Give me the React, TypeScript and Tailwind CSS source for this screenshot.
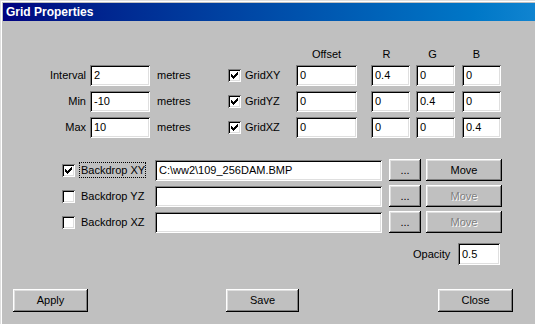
import React from "react";

const font = "font-['Liberation_Sans',Arial,sans-serif]";

// sunken white edit box
const Field = ({ value, className }: { value?: string; className: string }) => (
  <div
    className={`${className} bg-white text-black text-[11px] leading-[21px] pl-[4px] whitespace-nowrap overflow-hidden shadow-[inset_1px_1px_#808080,inset_-1px_-1px_#ffffff,inset_2px_2px_#000000,inset_-2px_-2px_#dfdfdf]`}
  >
    {value}
  </div>
);

// raised push button
const Button = ({
  label,
  className,
  disabled,
}: {
  label: string;
  className: string;
  disabled?: boolean;
}) => (
  <div
    className={`${className} flex items-center justify-center text-[11px] bg-[#c0c0c0] shadow-[inset_-1px_-1px_#000000,inset_1px_1px_#ffffff,inset_-2px_-2px_#808080,inset_2px_2px_#dfdfdf] ${
      disabled ? "text-[#808080] [text-shadow:1px_1px_#ffffff]" : "text-black"
    }`}
  >
    {label}
  </div>
);

const checkCols = [2, 3, 4, 3, 2, 1, 0];

const CheckBox = ({ checked, className }: { checked?: boolean; className: string }) => (
  <div
    className={`${className} w-[13px] h-[13px] shrink-0 bg-white shadow-[inset_1px_1px_#808080,inset_-1px_-1px_#ffffff,inset_2px_2px_#000000,inset_-2px_-2px_#dfdfdf]`}
  >
    {checked && (
      <svg width="13" height="13" viewBox="0 0 13 13" shapeRendering="crispEdges">
        {checkCols.map((top, i) => (
          <rect key={i} x={3 + i} y={3 + top} width={1} height={3} fill="#000" />
        ))}
      </svg>
    )}
  </div>
);

const gridRows = [
  { label: "Interval", value: "2", grid: "GridXY", r: "0.4", g: "0", b: "0" },
  { label: "Min", value: "-10", grid: "GridYZ", r: "0", g: "0.4", b: "0" },
  { label: "Max", value: "10", grid: "GridXZ", r: "0", g: "0", b: "0.4" },
];

const backdrops = [
  { label: "Backdrop XY", checked: true, path: "C:\\ww2\\109_256DAM.BMP" },
  { label: "Backdrop YZ", checked: false, path: "" },
  { label: "Backdrop XZ", checked: false, path: "" },
];

export default function App() {
  return (
    <div
      className={`${font} w-[535px] h-[324px] overflow-hidden bg-[#c0c0c0] border-t border-l border-[#dfdfdf] text-black select-none`}
    >
      <div className="h-full border-t border-l border-white">
        {/* title bar */}
        <div className="ml-[1px] mt-[1px] h-[18px] flex items-center pl-[3px] bg-linear-to-r from-[#000080] to-[#1084d0]">
          <span className="text-white font-bold text-[12px]">Grid Properties</span>
        </div>

        {/* column headers */}
        <div className="flex mt-[27px] h-[12px] text-[11px] leading-[12px]">
          <div className="ml-[294px] w-[61px] text-center">Offset</div>
          <div className="ml-[10px] w-[39px] text-center">R</div>
          <div className="ml-[7px] w-[39px] text-center">G</div>
          <div className="ml-[5px] w-[39px] text-center">B</div>
        </div>

        {/* grid settings */}
        <div className="flex flex-col gap-[5px] mt-[5px]">
          {gridRows.map((row) => (
            <div key={row.label} className="flex items-center h-[21px] text-[11px]">
              <div className="w-[84px] text-right">{row.label}</div>
              <Field value={row.value} className="ml-[4px] w-[60px] h-[21px]" />
              <div className="ml-[7px] w-[71px]">metres</div>
              <CheckBox checked className="" />
              <div className="ml-[4px] w-[51px]">{row.grid}</div>
              <Field value="0" className="w-[61px] h-[21px]" />
              <Field value={row.r} className="ml-[14px] w-[39px] h-[21px]" />
              <Field value={row.g} className="ml-[6px] w-[39px] h-[21px]" />
              <Field value={row.b} className="ml-[7px] w-[39px] h-[21px]" />
            </div>
          ))}
        </div>

        {/* backdrops */}
        <div className="flex flex-col gap-[4px] mt-[21px]">
          {backdrops.map((bd, i) => (
            <div key={bd.label} className="flex items-center h-[22px] text-[11px]">
              <CheckBox checked={bd.checked} className="ml-[60px]" />
              <div
                className={`ml-[4px] w-[67px] h-[16px] leading-[14px] pl-[1px] whitespace-nowrap border border-dotted ${
                  i === 0 ? "border-black" : "border-transparent"
                }`}
              >
                {bd.label}
              </div>
              <Field value={bd.path} className="ml-[9px] w-[227px] h-[21px]" />
              <Button label="..." className="ml-[7px] w-[32px] h-[22px]" />
              <Button label="Move" disabled={i > 0} className="ml-[5px] w-[76px] h-[22px]" />
            </div>
          ))}
        </div>

        {/* opacity */}
        <div className="flex items-center mt-[10px] h-[22px] text-[11px]">
          <div className="ml-[411px] w-[45px]">Opacity</div>
          <Field value="0.5" className="w-[42px] h-[22px] leading-[22px]" />
        </div>

        {/* bottom buttons */}
        <div className="flex mt-[24px]">
          <Button label="Apply" className="ml-[11px] w-[75px] h-[23px]" />
          <Button label="Save" className="ml-[138px] w-[73px] h-[23px]" />
          <Button label="Close" className="ml-[139px] w-[75px] h-[23px]" />
        </div>
      </div>
    </div>
  );
}
